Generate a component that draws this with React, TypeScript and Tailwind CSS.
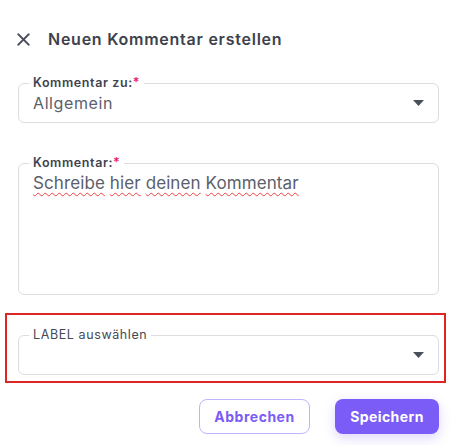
import { X } from "lucide-react";

function Caret() {
  return (
    <svg width="11" height="6" viewBox="0 0 11 6" className="shrink-0">
      <path d="M0 0h11L5.5 6z" fill="#4a4f5c" />
    </svg>
  );
}

function Field({
  label,
  required,
  bold,
  className,
  children,
}: {
  label: string;
  required?: boolean;
  bold?: boolean;
  className?: string;
  children?: React.ReactNode;
}) {
  return (
    <div className={"relative rounded-md border border-[#dcdde1] " + (className ?? "")}>
      <span
        className={
          "absolute left-[10px] -top-[9px] bg-white px-[4px] leading-[16px] " +
          (bold
            ? "text-[12.5px] font-semibold text-[#3f4350] tracking-[0.6px]"
            : "text-[12.5px] text-[#454a56] tracking-[0.6px]")
        }
      >
        {label}
        {required ? <span className="text-[#e8175d]">*</span> : null}
      </span>
      {children}
    </div>
  );
}

const words = ["Schreibe", "hier", "deinen", "Kommentar"];

export default function App() {
  return (
    <div
      className="w-[451px] h-[445px] bg-white flex flex-col"
      style={{ fontFamily: "Inter, 'Noto Sans', sans-serif" }}
    >
      <div className="flex items-center h-[20px] mt-[29px] pl-[13px]">
        <X size={21} strokeWidth={2.1} className="text-[#4a4f5c]" />
        <h1 className="ml-[14px] text-[16px] font-semibold text-[#3d414c] tracking-[0.75px]">
          Neuen Kommentar erstellen
        </h1>
      </div>

      <Field label="Kommentar zu:" required bold className="ml-[18px] mr-[12px] mt-[34px] h-[40px]">
        <div className="flex items-center h-full pl-[14px] pr-[14px]">
          <span className="flex-1 text-[16px] text-[#5b606c] tracking-[0.6px]">Allgemein</span>
          <Caret />
        </div>
      </Field>

      <Field label="Kommentar:" required bold className="ml-[18px] mr-[12px] mt-[40px] h-[132px]">
        <div className="pl-[14px] pt-[8px] text-[17px] leading-[22px] text-[#5b606c] tracking-[0.1px]">
          {words.map((w, i) => (
            <span key={w}>
              <span className="underline decoration-wavy decoration-[#f04040] decoration-1 underline-offset-[3px]">
                {w}
              </span>
              {i < words.length - 1 ? " " : ""}
            </span>
          ))}
        </div>
      </Field>

      <div className="mx-[5px] mt-[18px] h-[70px] border-2 border-[#e02424] pl-[11px] pr-[5px] pt-[20px]">
        <Field label="LABEL auswählen" className="h-[40px]">
          <div className="flex items-center justify-end h-full pr-[14px]">
            <Caret />
          </div>
        </Field>
      </div>

      <div className="flex justify-end gap-[25px] mt-[16px] pr-[12px]">
        <button className="w-[111px] h-[35px] rounded-lg border border-[#c2b3fb] text-[14px] font-bold text-[#7b5cf5] tracking-[0.5px]">
          Abbrechen
        </button>
        <button className="w-[104px] h-[35px] rounded-lg bg-[#7b5cf6] text-[14px] font-bold text-white tracking-[0.4px] shadow-[0_4px_12px_rgba(123,92,246,0.25)]">
          Speichern
        </button>
      </div>
    </div>
  );
}
